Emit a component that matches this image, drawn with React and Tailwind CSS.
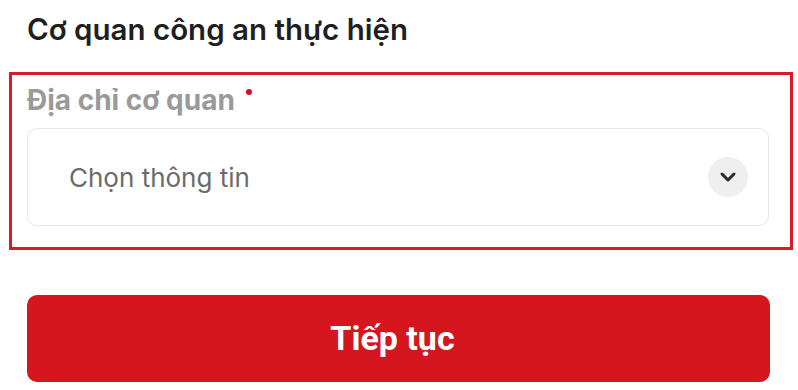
import { ChevronDown } from 'lucide-react'

export default function App() {
  return (
    <div className="w-[798px] h-[390px] bg-white overflow-hidden font-['Inter','Liberation_Sans',sans-serif]">
      <h1 className="pl-[27px] pt-[11px] h-[72px] text-[29.5px] font-semibold text-[#1f1f1f] leading-[36px]">
        Cơ quan công an thực hiện
      </h1>

      {/* Highlighted field */}
      <div className="ml-[9px] w-[784px] h-[178px] border-[3px] border-[#d81a2a] pl-[15px] pr-[21px] pt-[7px]">
        <div className="flex items-start gap-[11px] h-[46px]">
          <span className="text-[28px] font-bold text-[#9a9a9a] leading-[36px]">Địa chỉ cơ quan</span>
          <span className="mt-[7px] w-[6px] h-[6px] rounded-full bg-[#d0102a]" />
        </div>
        <div className="h-[98px] rounded-[10px] border border-[#e6e6e6] flex items-center justify-between pl-[41px] pr-[20px]">
          <span className="text-[26px] text-[#6b6b6b]">Chọn thông tin</span>
          <span className="w-[40px] h-[40px] rounded-full bg-[#efefef] flex items-center justify-center">
            <ChevronDown className="w-[24px] h-[24px] text-[#2a2a2a]" strokeWidth={3} />
          </span>
        </div>
      </div>

      <div className="pl-[27px] pt-[45px]">
        <button className="w-[743px] h-[87px] rounded-[10px] bg-[#d5161f] text-white text-[34px] font-bold flex items-center justify-center pr-[12px] font-['Roboto',sans-serif]">
          Tiếp tục
        </button>
      </div>
    </div>
  )
}
